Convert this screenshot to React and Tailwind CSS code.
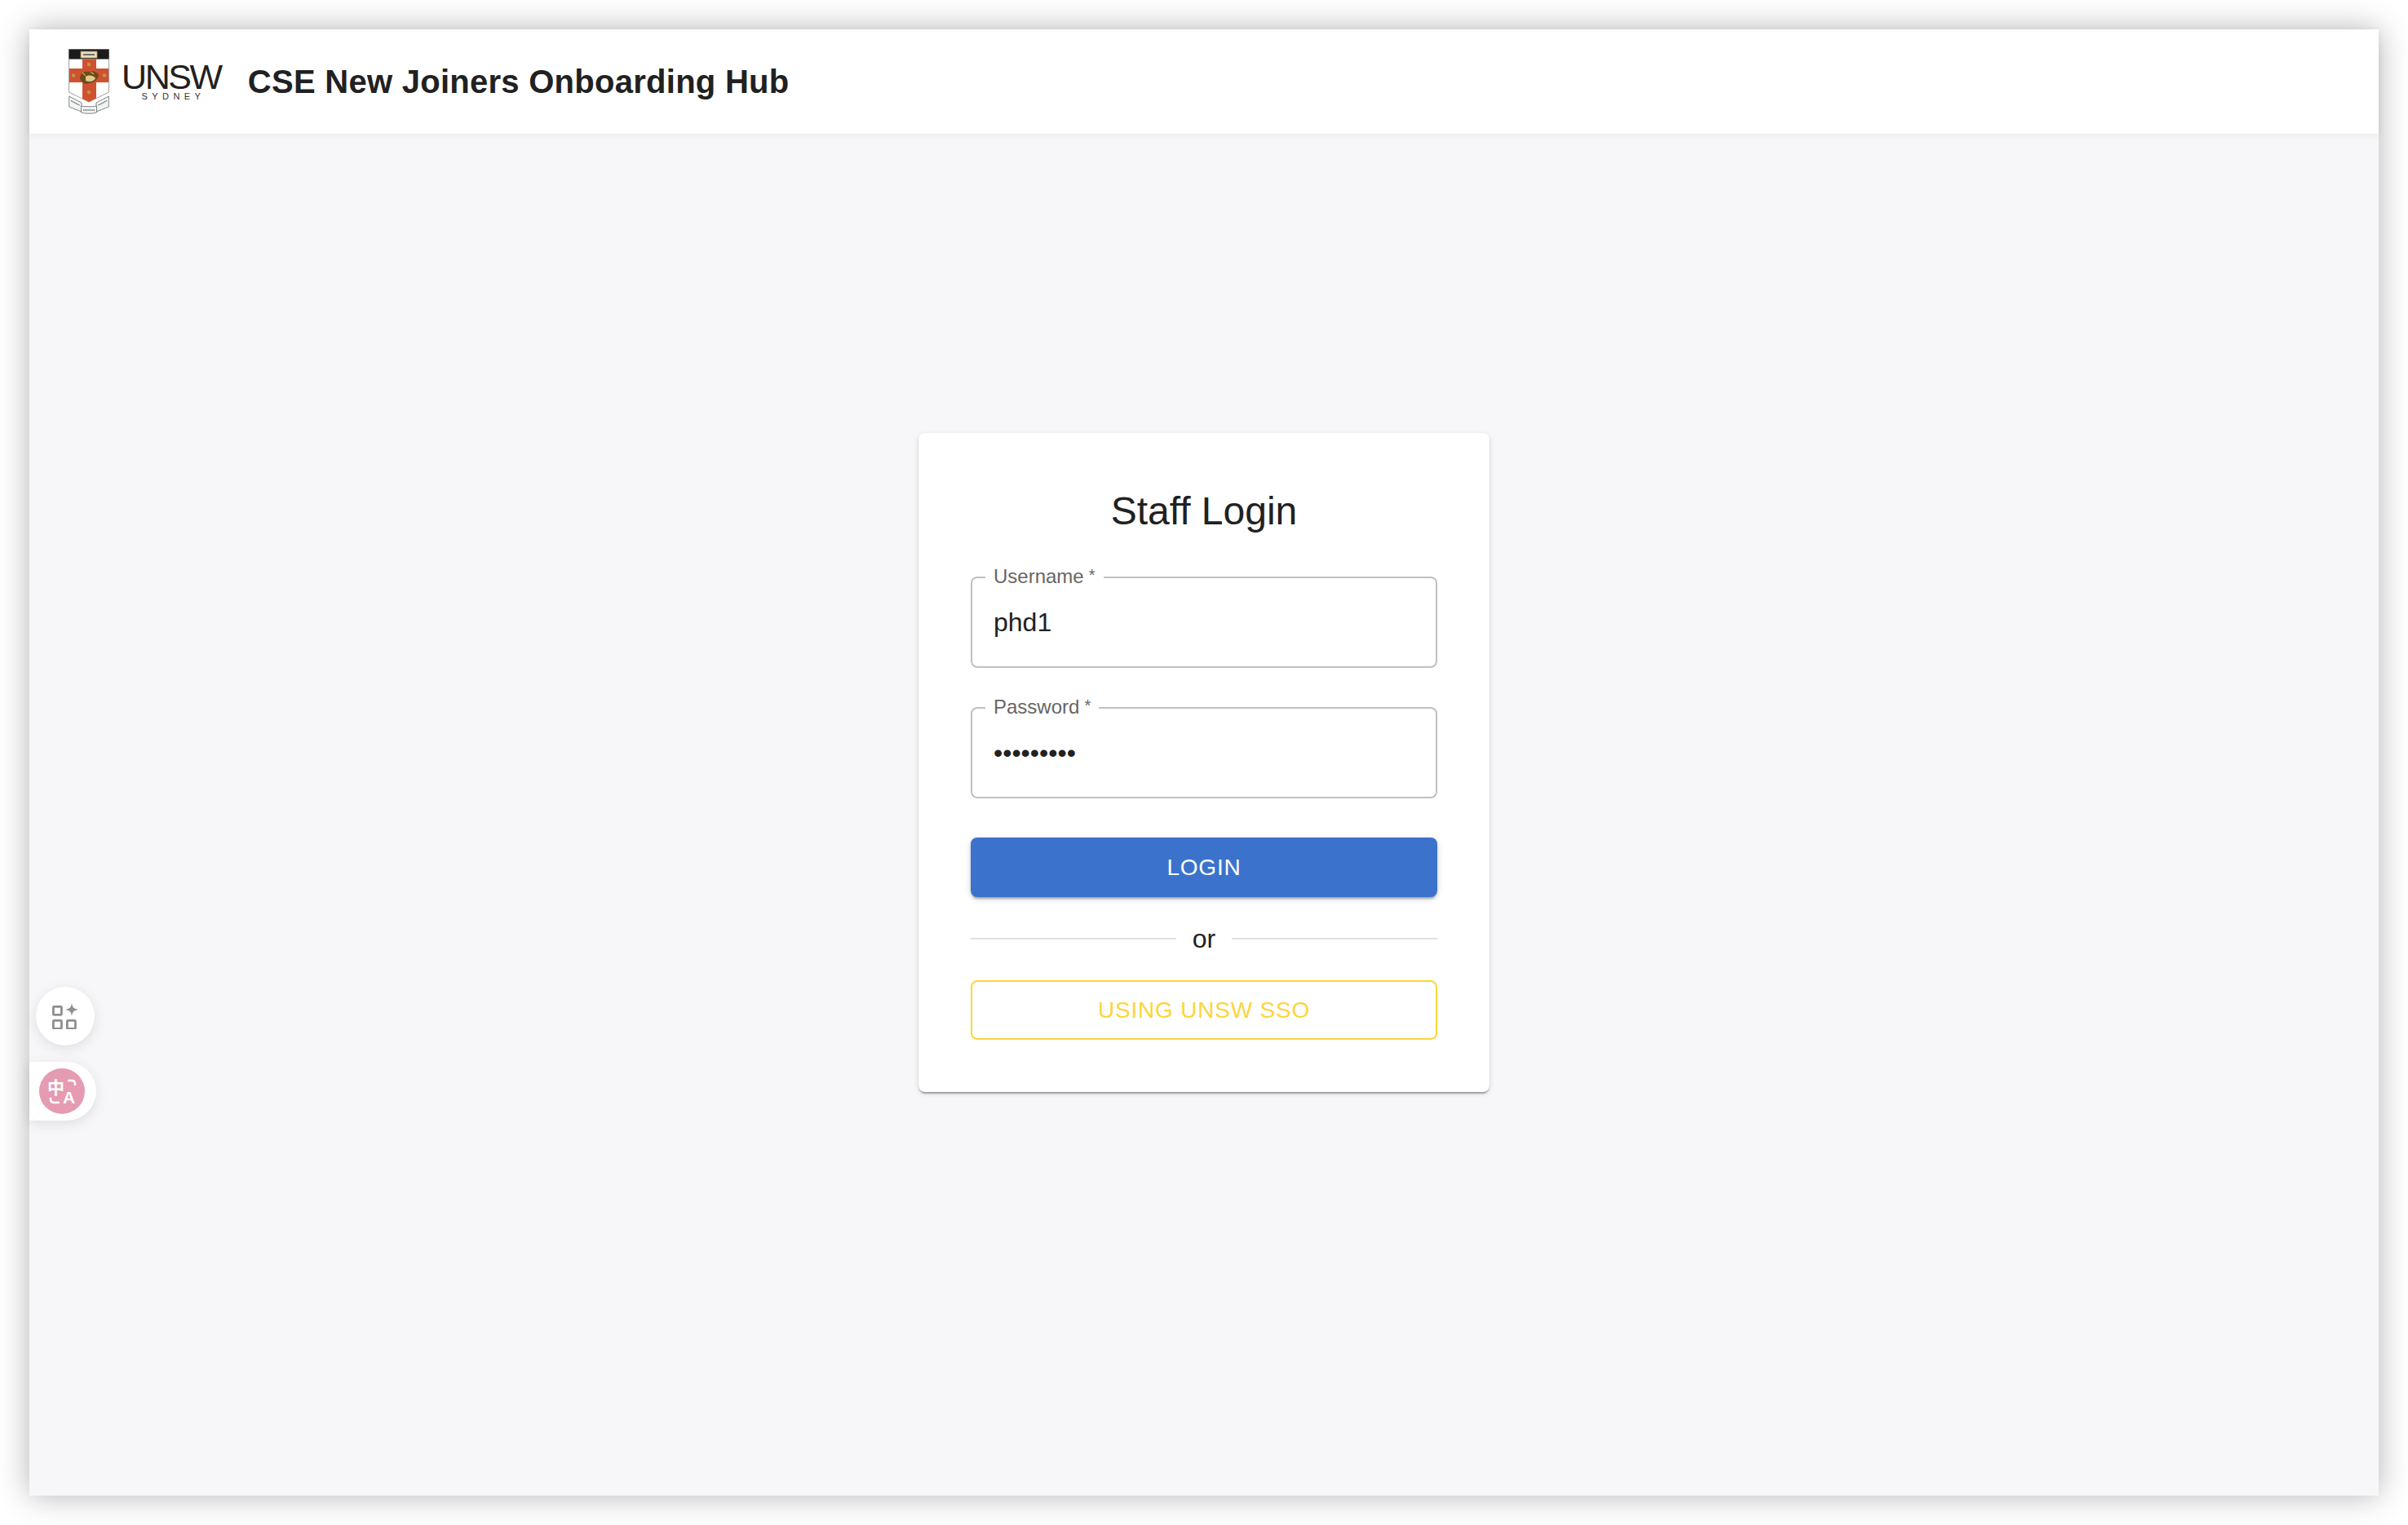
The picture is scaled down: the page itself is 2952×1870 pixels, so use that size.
const fontClass = "font-['Liberation_Sans',Arial,sans-serif]"

function Crest() {
  return (
    <svg width="50" height="80" viewBox="0 0 50 80" className="shrink-0">
      <path d="M0.5 0.5H49.5V53L25 65L0.5 53Z" fill="#fff" stroke="#8a8a8a" strokeWidth="0.8" />
      <rect x="0.5" y="0.5" width="49" height="12" fill="#1d1b1b" />
      <rect x="15" y="3" width="20" height="8" fill="#e8dcc0" stroke="#a88f4a" strokeWidth="0.8" />
      <path d="M18 7H32" stroke="#555" strokeWidth="1.6" />
      <path d="M17 12.5H34V60.6L25 65L17 61Z" fill="#cf5230" />
      <rect x="1" y="24" width="48" height="17" fill="#cf5230" />
      <circle cx="25" cy="19" r="2.2" fill="#b79a46" />
      <circle cx="25" cy="53" r="2.2" fill="#b79a46" />
      <circle cx="6" cy="37" r="2.2" fill="#b79a46" transform="translate(0 -4.5)" />
      <circle cx="44" cy="37" r="2.2" fill="#b79a46" transform="translate(0 -4.5)" />
      <path d="M14 36C15 29 19 27 24 28C30 26 36 28 37 33C35 38 31 42 24 42C20 44 16 41 14 36Z" fill="#6b4a1c" />
      <path d="M21 34C26 31 31 33 33 36C31 40 26 41 21 39Z" fill="#e0c98a" />
      <path d="M17 29L21 33M27 28L31 31" stroke="#d9a53a" strokeWidth="1.2" />
      <path d="M0.7 58L16 66V77L0.7 71Z" fill="#f2f4f4" stroke="#6f7a7a" strokeWidth="0.9" />
      <path d="M49.3 58L34 66V77L49.3 71Z" fill="#f2f4f4" stroke="#6f7a7a" strokeWidth="0.9" />
      <path d="M15.5 70C20 71 30 71 34.5 70V78C30 79.6 20 79.6 15.5 78Z" fill="#f2f4f4" stroke="#6f7a7a" strokeWidth="0.9" />
      <path d="M3 63.5L13.5 69M47 63.5L36.5 69M18 75H32" stroke="#666" strokeWidth="1.4" strokeDasharray="1.4 0.7" />
    </svg>
  )
}

function Logo() {
  return (
    <div className="flex items-center gap-[15px]">
      <Crest />
      <div className="flex flex-col items-center">
        <span className="text-[43px] leading-[35px] tracking-[-2.4px] text-[#231f20]">UNSW</span>
        <span className="pl-[5px] text-[11px] leading-[12px] tracking-[5.4px] text-[#333]">SYDNEY</span>
      </div>
    </div>
  )
}

function Field({ label, type, value }) {
  return (
    <div className="relative h-[112px] rounded-[8px] border-2 border-[#c0c0c0]">
      <span className="absolute left-[16px] top-[-18px] bg-white px-[10px] text-[24px] leading-[28px] text-[#666]">
        {label}<span className="pl-[6px] align-[3px] text-[20px]">*</span>
      </span>
      <input
        readOnly
        type={type}
        value={value}
        className="h-full w-full bg-transparent px-[26px] text-[32px] text-[#212121] outline-none"
      />
    </div>
  )
}

function GridSparkle() {
  return (
    <svg width="32" height="32" viewBox="0 0 32 32" fill="none" stroke="#8f8f8f" strokeWidth="2.8">
      <rect x="1.4" y="4.4" width="10" height="10" rx="1" />
      <rect x="1.4" y="21.4" width="10" height="10" rx="1" />
      <rect x="18.4" y="21.4" width="10" height="10" rx="1" />
      <path d="M24 0C25 5.5 26.5 7 32 8C26.5 9 25 10.5 24 16C23 10.5 21.5 9 16 8C21.5 7 23 5.5 24 0Z" fill="#8f8f8f" stroke="none" />
    </svg>
  )
}

function Translate() {
  return (
    <svg width="56" height="56" viewBox="0 0 56 56">
      <circle cx="28" cy="28" r="28" fill="#e59bb1" />
      <text x="20.5" y="31" textAnchor="middle" fontSize="21" fontWeight="700" fill="#fff" fontFamily="'Noto Sans CJK SC', sans-serif">中</text>
      <text x="36.5" y="43" textAnchor="middle" fontSize="21" fontWeight="700" fill="#fff" fontFamily="'Liberation Sans', sans-serif">A</text>
      <path d="M35 15H40C42.5 15 44 16.5 44 19V21M14 36V38C14 40.5 15.5 42 18 42H25" fill="none" stroke="#fff" strokeWidth="2.6" />
    </svg>
  )
}

export default function App() {
  return (
    <div className={`${fontClass} h-[1870px] w-[2952px] overflow-hidden bg-white p-[36px]`}>
      <div className="relative flex h-[1798px] w-[2880px] flex-col bg-[#f7f7f9] shadow-[0_0_36px_rgba(0,0,0,0.3)]">
        <header className="flex h-[128px] shrink-0 items-center gap-[33px] bg-white px-[48px] shadow-[0_2px_8px_rgba(0,0,0,0.06)]">
          <Logo />
          <h1 className="text-[40px] font-bold leading-none tracking-[0.27px] text-[#212121]">CSE New Joiners Onboarding Hub</h1>
        </header>

        <main className="flex flex-1 items-center justify-center pb-[128px]">
          <form className="w-[700px] rounded-[8px] bg-white p-[64px] shadow-[0_4px_2px_-2px_rgba(0,0,0,0.2),0_2px_2px_rgba(0,0,0,0.14),0_2px_6px_rgba(0,0,0,0.12)]">
            <h2 className="mb-[48px] text-center text-[48px] font-normal leading-[64px] text-[#212121]">Staff Login</h2>
            <div className="flex flex-col gap-[48px]">
              <Field label="Username" type="text" value="phd1" />
              <Field label="Password" type="password" value="password1" />
              <button type="button" className="h-[73px] rounded-[8px] bg-[#3b73cc] text-[28px] tracking-[0.8px] text-white shadow-[0_4px_2px_-2px_rgba(0,0,0,0.2),0_2px_4px_rgba(0,0,0,0.14),0_2px_10px_rgba(0,0,0,0.12)]">
                LOGIN
              </button>
            </div>
            <div className="my-[27px] flex h-[48px] items-center gap-[20px] text-[32px] text-[#212121]">
              <div className="h-[2px] flex-1 bg-[#e0e0e0]" />
              or
              <div className="h-[2px] flex-1 bg-[#e0e0e0]" />
            </div>
            <button type="button" className="h-[73px] w-full rounded-[8px] border-2 border-[#fdd53a] text-[28px] tracking-[0.8px] text-[#fdd53a]">
              USING UNSW SSO
            </button>
          </form>
        </main>

        <button type="button" className="absolute left-[8px] top-[1174px] flex h-[72px] w-[72px] items-center justify-center rounded-full bg-white shadow-[0_4px_16px_rgba(0,0,0,0.1)]">
          <GridSparkle />
        </button>
        <button type="button" className="absolute left-0 top-[1266px] flex h-[72px] w-[82px] items-center rounded-r-full bg-white pl-[12px] shadow-[0_4px_16px_rgba(0,0,0,0.1)]">
          <Translate />
        </button>
      </div>
    </div>
  )
}
